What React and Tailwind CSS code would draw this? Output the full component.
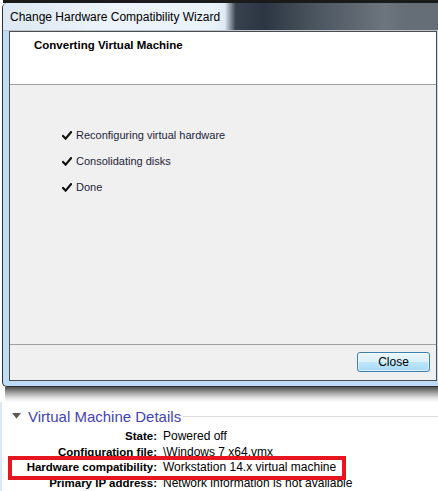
import React from "react";

const Check = () => (
  <svg width="10" height="9" viewBox="0 0 10 9" className="shrink-0">
    <path d="M1 5 L3.6 7.6 L9 1.2" fill="none" stroke="#111" strokeWidth="2.2" strokeLinecap="square" />
  </svg>
);

const steps = ["Reconfiguring virtual hardware", "Consolidating disks", "Done"];

const details = [
  ["State:", "Powered off"],
  ["Configuration file:", "\\Windows 7 x64.vmx"],
  ["Hardware compatibility:", "Workstation 14.x virtual machine"],
  ["Primary IP address:", "Network information is not available"],
];

const App = () => {
  return (
    <div className="relative w-[438px] h-[491px] overflow-hidden bg-white font-['Liberation_Sans',Arial,sans-serif] text-black">
      {/* dark desktop strip behind the window */}
      <div className="h-[3px] ml-[3px] bg-[#1a1a1a]" />

      {/* wizard window */}
      <div className="ml-[2px] w-[436px] flex flex-col rounded-tl-[5px] rounded-bl-[5px] border-l border-b border-[#2e2e2e] bg-[#bfdcf6]">
        <div className="h-[28px] flex items-center pl-[7px] rounded-tl-[5px] bg-[linear-gradient(90deg,#dce8f4_0%,#edf3fa_25%,#eaf2f9_48%,#dfeaf5_51%,#37424e_53.5%,#2b3642_60%,#4c5660_72%,#6d757e_88%,#656d76_92%,#656d76_100%)] border-b border-[#b9c6d2]">
          <span className="text-[12px] leading-none">Change Hardware Compatibility Wizard</span>
        </div>

        <div className="pl-[6px] pr-[1px] pb-[5px]">
          <div className="flex flex-col border border-[#4d4d4d] bg-[#f0f0f0]">
            <div className="h-[53px] bg-white border-b border-[#a0a0a0] pl-[24px] pt-[6px]">
              <div className="text-[11.5px] leading-[14px] font-bold">Converting Virtual Machine</div>
            </div>

            <div className="h-[260px] pl-[52px] pt-[37px] border-b border-[#a0a0a0]">
              {steps.map((s) => (
                <div key={s} className="h-[26px] flex items-center gap-[4px]">
                  <Check />
                  <span className="text-[11px] text-[#1e1e3c]">{s}</span>
                </div>
              ))}
            </div>

            <div className="h-[35px] flex justify-end items-start pt-[7px] pr-[6px]">
              <button className="w-[73px] h-[20px] rounded-[3px] border border-[#3c7fb1] bg-[linear-gradient(180deg,#eaf6fd_0%,#d9f0fc_50%,#bee6fd_51%,#a7d9f5_100%)] shadow-[inset_0_0_0_1px_rgba(255,255,255,0.6)] text-[12px] leading-none text-black">
                Close
              </button>
            </div>
          </div>
        </div>
      </div>

      {/* window drop shadow */}
      <div className="h-[15px] ml-[5px] bg-[linear-gradient(180deg,#4f4f4f_0%,#9a9a9a_35%,#dedede_70%,#ffffff_100%)]" />

      {/* details section */}
      <div className="border-l-2 border-[#dce9f6] pt-[4px]">
        <div className="h-[20px] flex items-center">
          <svg width="9" height="6" viewBox="0 0 9 6" className="ml-[10px] mr-[7px]">
            <polygon points="0,0 9,0 4.5,5.5" fill="#575757" />
          </svg>
          <span className="text-[15px] leading-none text-[#4343b4]">Virtual Machine Details</span>
          <div className="flex-1 h-px ml-[2px] bg-[#dcdcdc]" />
        </div>

        <div className="grid grid-cols-[155px_1fr] gap-x-[6px] mt-[3px] text-[12px] leading-[15.5px]">
          {details.map(([k, v]) => (
            <React.Fragment key={k}>
              <div className="text-right font-bold text-[11.5px]">{k}</div>
              <div className="whitespace-nowrap">{v}</div>
            </React.Fragment>
          ))}
        </div>
      </div>

      {/* red annotation box */}
      <div className="absolute left-[8px] top-[456px] w-[338px] h-[24px] border-4 border-[#e8141f]" />
    </div>
  );
};

export default App;
